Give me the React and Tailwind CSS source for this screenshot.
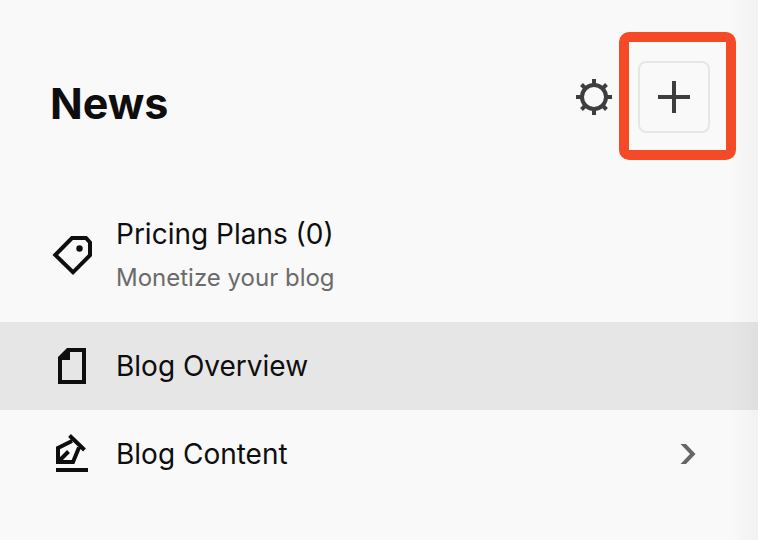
import React from "react";

function GearIcon() {
  return (
    <svg width="36" height="36" viewBox="0 0 36 36" fill="none" stroke="#3e3e3e" strokeWidth="4" aria-hidden="true">
      <circle cx="18" cy="18" r="12" />
      <path d="M18 0V6M18 30V36M0 18H6M30 18H36M5.5 5.5L10 10M26 26L30.5 30.5M30.5 5.5L26 10M10 26L5.5 30.5" />
    </svg>
  );
}

function PlusIcon() {
  return (
    <svg width="32" height="32" viewBox="0 0 32 32" fill="none" stroke="#3e3e3e" strokeWidth="4" aria-hidden="true">
      <path d="M16 0V32M0 16H32" />
    </svg>
  );
}

function TagIcon() {
  return (
    <svg className="shrink-0" width="48" height="48" viewBox="0 0 48 48" fill="none" aria-hidden="true">
      <path d="M7.3 23L24 6H38L42 10.5V23.2L25 40.3Z" stroke="#0e0e0e" strokeWidth="4" />
      <circle cx="31.5" cy="16.5" r="3.2" fill="#0e0e0e" />
    </svg>
  );
}

function PageIcon() {
  return (
    <svg className="shrink-0" width="48" height="48" viewBox="0 0 48 48" fill="#0e0e0e" aria-hidden="true">
      <path fillRule="evenodd" d="M10 15L19 6H38V42H10ZM22 10H34V38H14V18H22Z" />
    </svg>
  );
}

function PenIcon() {
  return (
    <svg className="shrink-0" width="48" height="48" viewBox="0 0 48 48" fill="none" stroke="#0e0e0e" strokeWidth="4" aria-hidden="true">
      <path d="M8 40H40M21.5 5.5L36.5 20M24 11L10 18V32H25L31 17.5M10 32L20.5 21.5" />
    </svg>
  );
}

function ChevronIcon() {
  return (
    <svg className="shrink-0" width="16" height="20" viewBox="0 0 16 20" fill="#666666" aria-hidden="true">
      <path d="M0.5 0H6L15.5 10L6 20H0.5L10 10Z" />
    </svg>
  );
}

function MenuRow({ icon, title, subtitle, active, arrow }) {
  return (
    <li>
      <a
        href="#"
        aria-current={active ? "page" : undefined}
        className={`flex items-center gap-5 pr-[62px] pl-12 ${subtitle ? "h-[132px]" : "h-[88px]"} ${active ? "bg-[#e6e6e6]" : ""}`}
      >
        {icon}
        <span className="flex grow flex-col gap-1">
          <span className="text-[28px] leading-10">{title}</span>
          {subtitle && <span className="text-2xl leading-10 text-[#6b6b6b]">{subtitle}</span>}
        </span>
        {arrow && <ChevronIcon />}
      </a>
    </li>
  );
}

export default function App() {
  return (
    <div className="relative min-h-screen bg-[#f9f9f9] font-['Inter','Liberation_Sans',sans-serif] text-[#0e0e0e]">
      <header className="flex items-center justify-between pt-[61px] pr-12 pl-[50px]">
        <h1 className="pt-3 text-[43px] leading-[60px] font-bold">News</h1>
        <div className="flex items-center gap-[26px]">
          <button type="button" aria-label="Settings">
            <GearIcon />
          </button>
          <div className="relative">
            <button
              type="button"
              aria-label="Add post"
              className="flex size-[72px] items-center justify-center rounded-lg border-2 border-[#e6e6e6]"
            >
              <PlusIcon />
            </button>
            <div className="pointer-events-none absolute -top-[29px] -right-[26px] -bottom-[27px] -left-[19px] rounded-[10px] border-10 border-[#f54a26]" />
          </div>
        </div>
      </header>
      <nav className="pt-[57px]">
        <ul>
          <MenuRow icon={<TagIcon />} title="Pricing Plans (0)" subtitle="Monetize your blog" />
          <MenuRow icon={<PageIcon />} title="Blog Overview" active />
          <MenuRow icon={<PenIcon />} title="Blog Content" arrow />
        </ul>
      </nav>
      <div className="pointer-events-none absolute inset-y-0 right-0 w-7 bg-linear-to-r from-transparent to-black/3" />
    </div>
  );
}
